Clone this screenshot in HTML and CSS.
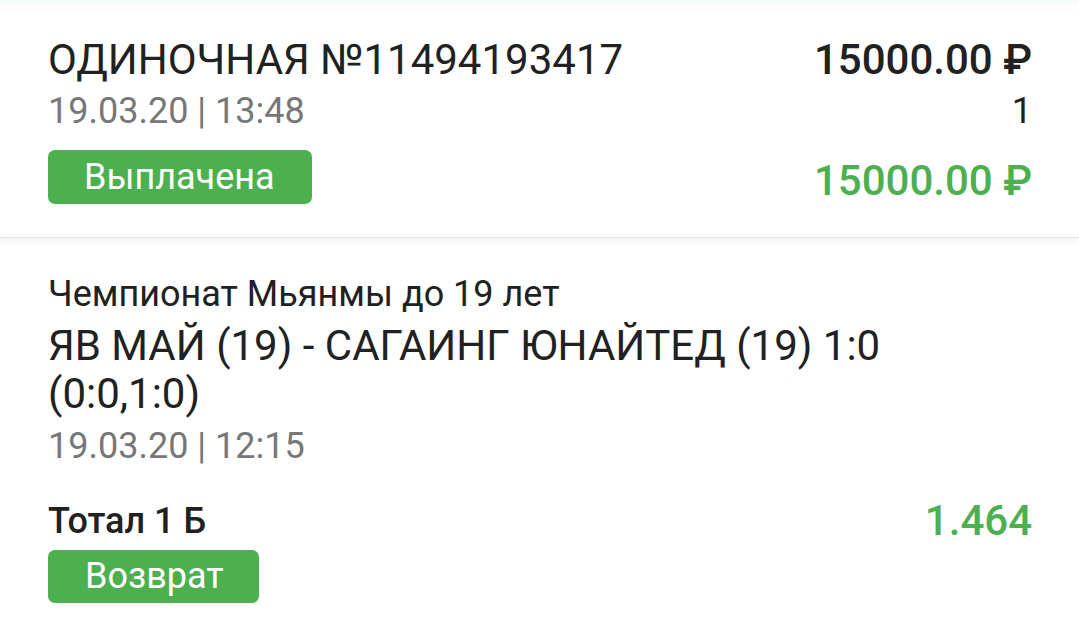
FILE: index.html
```html
<!DOCTYPE html>
<html>
<head>
  <title>Ставка</title>
  <link rel="stylesheet" href="styles.css">
</head>
<body>
  <div class="top-strip"></div>

  <div class="bet-head">
    <div class="row">
      <div class="title">ОДИНОЧНАЯ №11494193417</div>
      <div class="amount">15000.00 ₽</div>
    </div>
    <div class="row">
      <div class="date">19.03.20 | 13:48</div>
      <div class="count">1</div>
    </div>
    <div class="row row-status">
      <span class="badge">Выплачена</span>
      <div class="amount amount-win">15000.00 ₽</div>
    </div>
  </div>

  <div class="event">
    <div class="league">Чемпионат Мьянмы до 19 лет</div>
    <div class="match">ЯВ МАЙ (19) - САГАИНГ ЮНАЙТЕД (19) 1:0 (0:0,1:0)</div>
    <div class="date">19.03.20 | 12:15</div>
    <div class="row row-outcome">
      <div class="outcome">Тотал 1 Б</div>
      <div class="coef">1.464</div>
    </div>
    <span class="badge">Возврат</span>
  </div>
</body>
</html>
```

FILE: styles.css
```css
body { margin: 0; background: #fff; font-family: Roboto, "Noto Sans", sans-serif; color: #212121; }
.top-strip { height: 5px; background: linear-gradient(#effcf7, #fbfffd); }

.bet-head { padding: 28px 47px 31px 48px; border-bottom: 1px solid #e4e4e4; box-shadow: 0 3px 6px rgba(0,0,0,0.06); }
.row { display: flex; justify-content: space-between; align-items: baseline; }
.title { font-size: 42px; line-height: 53px; }
.amount { font-size: 42px; line-height: 53px; font-weight: 500; }
.amount-win { color: #4caf50; line-height: 51px; margin-top: 5px; }
.date { font-size: 36px; line-height: 51px; color: #777; }
.count { font-size: 36px; line-height: 51px; }
.row-status { align-items: flex-start; margin-top: 13px; }

.badge {
  display: inline-block;
  height: 54px;
  line-height: 54px;
  padding: 0 37px 0 36px;
  border-radius: 7px;
  background: #4caf50;
  color: #fff;
  font-size: 36px;
}

.event { padding: 29px 47px 0 48px; }
.league { font-size: 36px; line-height: 55px; }
.match { font-size: 42px; line-height: 48px; }
.event .date { line-height: 56px; }
.row-outcome { align-items: center; margin-top: 25px; }
.outcome { font-size: 36px; line-height: 44px; font-weight: 500; }
.coef { font-size: 42px; line-height: 44px; font-weight: 500; color: #4caf50; }
.event .badge { margin-top: 7px; height: 53px; line-height: 53px; padding: 0 35px 0 37px; }
```
